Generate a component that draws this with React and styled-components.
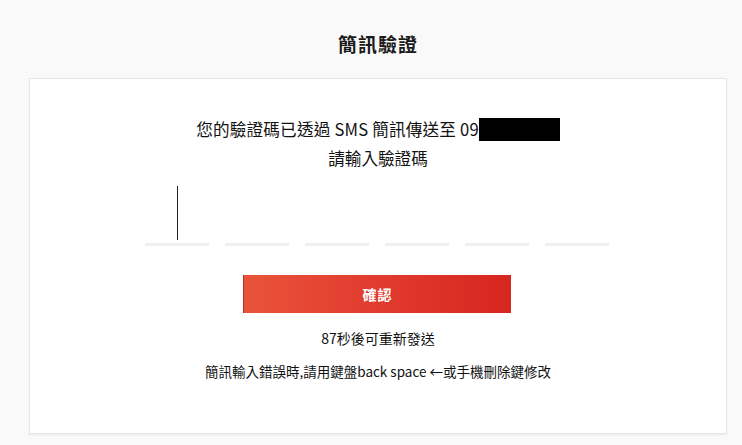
import React from 'react';
import styled, { createGlobalStyle } from 'styled-components';

const GlobalStyle = createGlobalStyle`
  html, body {
    margin: 0;
    padding: 0;
    background: #f9f9f9;
    font-family: "Noto Sans CJK TC", "Noto Sans", sans-serif;
    color: #111;
  }
`;

const Page = styled.div`
  width: 742px;
  height: 445px;
  box-sizing: border-box;
  padding: 28px 15px 0 29px;
  overflow: hidden;
`;

const Title = styled.h1`
  margin: 0 0 18px;
  height: 32px;
  line-height: 32px;
  text-align: center;
  font-size: 19px;
  font-weight: 700;
  letter-spacing: 1px;
  color: #1a1a1a;
`;

const Card = styled.section`
  background: #fff;
  border: 1px solid #e6e6e6;
  box-shadow: 0 1px 2px rgba(0, 0, 0, 0.06);
  height: 356px;
  box-sizing: border-box;
  padding-top: 38px;
  display: flex;
  flex-direction: column;
  align-items: center;
`;

const Line = styled.p`
  margin: 0;
  display: flex;
  align-items: center;
  justify-content: center;
  height: ${p => p.h || '24px'};
  font-size: ${p => p.size || '16.6px'};
  letter-spacing: ${p => p.ls || '0'};
  color: #111;
  white-space: pre;
`;

const Masked = styled.span`
  display: inline-block;
  width: 81px;
  height: 23px;
  background: #000;
`;

const CodeRow = styled.div`
  display: flex;
  gap: 16px;
  margin-top: 15px;
  margin-left: -2px;
`;

const Digit = styled.div`
  position: relative;
  width: 64px;
  height: 60px;
  border-bottom: 3px solid #efefef;
`;

const Caret = styled.span`
  position: absolute;
  left: 32px;
  top: 3px;
  width: 1px;
  height: 54px;
  background: #222;
`;

const Confirm = styled.button`
  margin-top: 29px;
  margin-left: -2px;
  width: 268px;
  height: 38px;
  border: none;
  border-left: 1px solid #b8321f;
  background: linear-gradient(90deg, #e9533a 0%, #e0392d 55%, #d6261f 100%);
  color: #fff;
  font-family: inherit;
  font-size: 14px;
  font-weight: 700;
  letter-spacing: 1px;
  padding: 0;
`;

const Note = styled(Line)`
  margin-top: ${p => p.mt || '0'};
  height: 22px;
`;

export default function App() {
  return (
    <>
      <GlobalStyle />
      <Page>
        <Title>簡訊驗證</Title>
        <Card>
          <Line ls="0.2px">您的驗證碼已透過 SMS 簡訊傳送至 09<Masked /></Line>
          <Line h="20px" style={{ marginTop: '7px' }}>請輸入驗證碼</Line>
          <CodeRow>
            {[0, 1, 2, 3, 4, 5].map(i => (
              <Digit key={i}>{i === 0 && <Caret />}</Digit>
            ))}
          </CodeRow>
          <Confirm>確認</Confirm>
          <Note size="14px" mt="14px">87秒後可重新發送</Note>
          <Note size="13.5px" mt="11px">簡訊輸入錯誤時,請用鍵盤back space ←或手機刪除鍵修改</Note>
        </Card>
      </Page>
    </>
  );
}
